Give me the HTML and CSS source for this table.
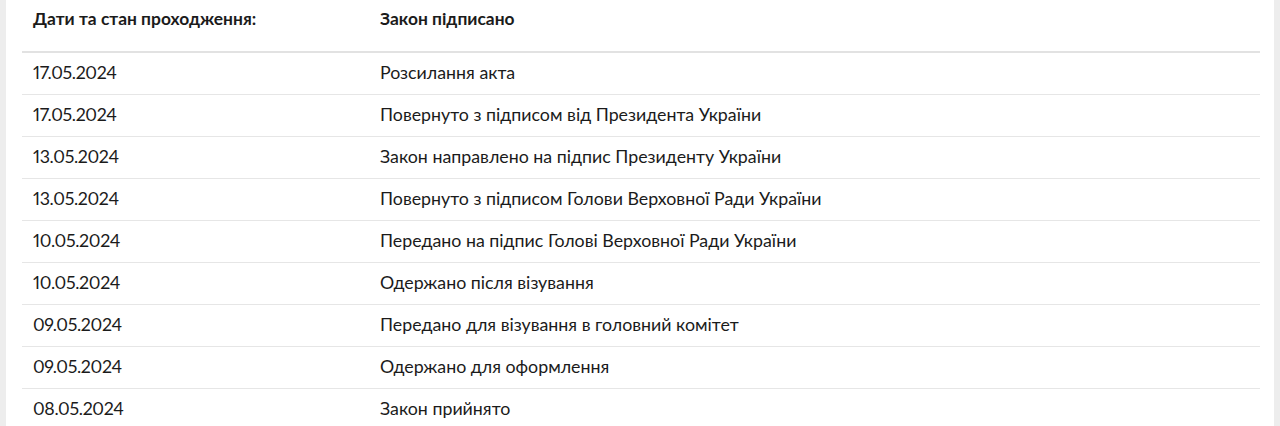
FILE: index.html
```html
<!DOCTYPE html>
<html lang="uk">
<head>
<meta charset="utf-8">
<link rel="stylesheet" href="styles.css">
</head>
<body>
<div class="frame">
  <div class="panel">
    <div class="table">
      <div class="row head">
        <div class="c1">Дати та стан проходження:</div>
        <div class="c2">Закон підписано</div>
      </div>
      <div class="row"><div class="c1 date">17.05.2024</div><div class="c2">Розсилання акта</div></div>
      <div class="row"><div class="c1 date">17.05.2024</div><div class="c2">Повернуто з підписом від Президента України</div></div>
      <div class="row"><div class="c1 date">13.05.2024</div><div class="c2">Закон направлено на підпис Президенту України</div></div>
      <div class="row"><div class="c1 date">13.05.2024</div><div class="c2">Повернуто з підписом Голови Верховної Ради України</div></div>
      <div class="row"><div class="c1 date">10.05.2024</div><div class="c2">Передано на підпис Голові Верховної Ради України</div></div>
      <div class="row"><div class="c1 date">10.05.2024</div><div class="c2">Одержано після візування</div></div>
      <div class="row"><div class="c1 date">09.05.2024</div><div class="c2">Передано для візування в головний комітет</div></div>
      <div class="row"><div class="c1 date">09.05.2024</div><div class="c2">Одержано для оформлення</div></div>
      <div class="row"><div class="c1 date">08.05.2024</div><div class="c2">Закон прийнято</div></div>
    </div>
  </div>
</div>
</body>
</html>
```

FILE: styles.css
```css
html, body {
  margin: 0;
  padding: 0;
  background: #ededed;
}
body {
  font-family: Lato, "Open Sans", sans-serif;
  color: #1b1b1b;
}
.frame {
  padding: 0 6px;
  height: 426px;
  overflow: hidden;
}
.panel {
  background: #fff;
  padding: 0 14px 0 16px;
  height: 100%;
}
.table {
  display: flex;
  flex-direction: column;
}
.row {
  display: flex;
  height: 41px;
  align-items: center;
  border-bottom: 1px solid #e6e6e6;
  font-size: 17.8px;
  font-variant-numeric: proportional-nums;
}
.row.head {
  height: 51px;
  align-items: flex-start;
  border-bottom: 2px solid #e2e2e2;
  font-weight: 700;
  font-size: 17.4px;
}
.head .c1, .head .c2 {
  padding-top: 8px;
}
.c1 {
  width: 347px;
  padding-left: 11px;
}
.c2 {
  flex: 1;
}
.date {
  letter-spacing: -0.35px;
}
.row:not(.head) .c1, .row:not(.head) .c2 {
  padding-bottom: 3px;
}
```
